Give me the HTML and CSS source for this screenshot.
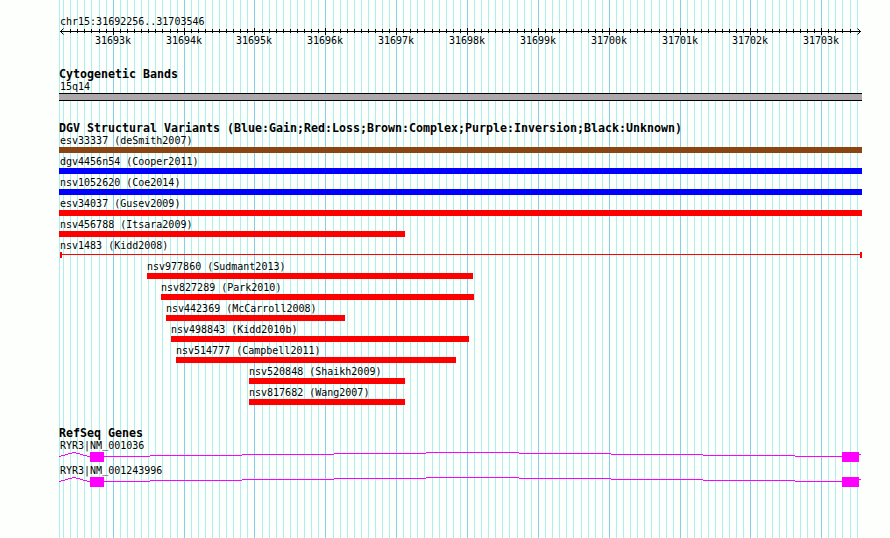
FILE: index.html
```
<!DOCTYPE html>
<html lang="en">
<head>
    <meta charset="UTF-8">
    <meta name="viewport" content="width=device-width, initial-scale=1.0">
    <title>chr15:31692256..31703546</title>
    <link rel="stylesheet" href="styles.css">
</head>
<body>
    <div class="browser">
        <svg class="grid" id="grid" width="890" height="538"></svg>

        <div class="ruler">
            <div class="label">chr15:31692256..31703546</div>
            <svg class="scale" id="scale" width="890" height="24"></svg>
        </div>

        <div class="track cytoband">
            <h2>Cytogenetic Bands</h2>
            <div class="label">15q14</div>
            <div class="band"></div>
        </div>

        <div class="track variants">
            <h2>DGV Structural Variants (Blue:Gain;Red:Loss;Brown:Complex;Purple:Inversion;Black:Unknown)</h2>
            <div id="variants"></div>
        </div>

        <div class="track genes">
            <h2>RefSeq Genes</h2>
            <div class="gene">
                <div class="label">RYR3|NM<span class="underscore">_</span>001036</div>
                <svg class="transcript" width="803" height="10"><use href="#ryr3"/></svg>
            </div>
            <div class="gene">
                <div class="label">RYR3|NM<span class="underscore">_</span>001243996</div>
                <svg class="transcript" width="803" height="10"><use href="#ryr3"/></svg>
            </div>
        </div>
    </div>

    <svg class="defs" width="0" height="0">
        <defs>
            <g id="ryr3">
                <path class="intron" d="M0 4.5h2M2 3.5h4M6 2.5h3M9 1.5h4M13 .5h4M17 1.5h4M21 2.5h3M24 3.5h4M28 4.5h3"/>
                <path class="intron" d="M45 4.5h46M91 3.5h92M183 2.5h92M275 1.5h92M367 .5h93M460 1.5h92M552 2.5h92M644 3.5h92M736 4.5h47M800 2.5h2"/>
                <rect class="exon" x="31" width="14" height="10"/>
                <rect class="exon" x="783" width="17" height="10"/>
            </g>
        </defs>
    </svg>

    <script src="script.js"></script>
</body>
</html>
```

FILE: styles.css
```
* {
    box-sizing: border-box;
    margin: 0;
    padding: 0;
}

body {
    background-color: #fdfffc;
    color: #000;
    font-family: 'DejaVu Sans Mono', monospace;
}

.browser {
    position: relative;
    width: 890px;
    height: 538px;
    overflow: hidden;
}

/* grid lines run behind every track */
.grid {
    position: absolute;
    top: 0;
    left: 0;
    z-index: -1;
}

.grid .minor {
    stroke: #afeeee;
}

.grid .major {
    stroke: #87ceeb;
}

.ruler {
    height: 68px;
    padding-top: 14px;
}

.ruler .label {
    height: 13px;
    margin-left: 59px;
}

.label {
    height: 15px;
    padding-left: 1px;
    font-size: 10px;
    line-height: 15px;
    white-space: pre;
}

.scale {
    display: block;
}

.scale path {
    fill: none;
    stroke: #000;
}

.scale text {
    font-size: 10px;
    text-anchor: middle;
}

.track {
    width: 803px;
    margin-left: 59px;
}

h2 {
    height: 12px;
    font-size: 11.63px;
    line-height: 12px;
    white-space: nowrap;
}

.cytoband {
    height: 54px;
}

.cytoband .label {
    height: 13px;
    line-height: 13px;
}

.band {
    height: 8px;
    background-color: #aca8ac;
    border-top: 1px solid #000;
    border-bottom: 1px solid #000;
}

.variants {
    height: 305px;
}

.variants h2 {
    height: 10px;
}

.variant .label {
    line-height: 17px;
}

.bar {
    height: 6px;
}

.complex {
    background-color: #8b4513;
}

.gain {
    background-color: #0000ff;
}

.loss {
    background-color: #ff0000;
}

.range {
    margin-left: 1px;
    border: solid #ff0000;
    border-width: 0 2px;
    background: linear-gradient(#ff0000, #ff0000) 0 2px / 100% 1px no-repeat;
}

.genes h2 {
    height: 11px;
}

.gene {
    height: 25px;
}

.gene .label {
    height: 14px;
}

/* keeps the underscore clear of the exon box below */
.underscore {
    line-height: 0;
    vertical-align: 1px;
}

.transcript {
    display: block;
}

.intron {
    fill: none;
    stroke: #ff00ff;
}

.exon {
    fill: #ff00ff;
}
```

FILE: script.js
```
const majors = [113, 184, 254, 325, 396, 467, 538, 609, 680, 750, 821];

// x positions where the rounded spacing is 8px instead of 7px
const wide = [91, 162, 254, 325, 424, 509, 573, 651, 757, 842];

const variants = [
    { name: 'esv33337 (deSmith2007)', type: 'complex', start: 59, end: 862 },
    { name: 'dgv4456n54 (Cooper2011)', type: 'gain', start: 59, end: 862 },
    { name: 'nsv1052620 (Coe2014)', type: 'gain', start: 59, end: 862 },
    { name: 'esv34037 (Gusev2009)', type: 'loss', start: 59, end: 862 },
    { name: 'nsv456788 (Itsara2009)', type: 'loss', start: 59, end: 405 },
    { name: 'nsv1483 (Kidd2008)', type: 'range', start: 59, end: 862 },
    { name: 'nsv977860 (Sudmant2013)', type: 'loss', start: 147, end: 473 },
    { name: 'nsv827289 (Park2010)', type: 'loss', start: 161, end: 474 },
    { name: 'nsv442369 (McCarroll2008)', type: 'loss', start: 166, end: 345 },
    { name: 'nsv498843 (Kidd2010b)', type: 'loss', start: 171, end: 469 },
    { name: 'nsv514777 (Campbell2011)', type: 'loss', start: 176, end: 456 },
    { name: 'nsv520848 (Shaikh2009)', type: 'loss', start: 249, end: 405 },
    { name: 'nsv817682 (Wang2007)', type: 'loss', start: 249, end: 405 }
];

let minorLines = 'M59.5 0v538';
let majorLines = '';
let ticks = 'M60 4.5h801M63.5 1.5l-3 3l3 3M857.5 1.5l3 3l-3 3';
let labels = '';

for (let x = 63; x < 860; x += wide.includes(x) ? 8 : 7) {
    if (majors.includes(x)) {
        majorLines += `M${x + 0.5} 0v538`;
        ticks += `M${x + 0.5} 1v7`;
    } else {
        minorLines += `M${x + 0.5} 0v538`;
        // the end ticks give way to the arrowheads
        if (x > 63 && x < 857) {
            ticks += `M${x + 0.5} 2v4`;
        }
    }
}

majors.forEach((x, i) => {
    labels += `<text x="${x}" y="17">${31693 + i}k</text>`;
});

document.getElementById('grid').innerHTML =
    `<path class="minor" d="${minorLines}"/><path class="major" d="${majorLines}"/>`;
document.getElementById('scale').innerHTML = `<path d="${ticks}"/>${labels}`;

document.getElementById('variants').innerHTML = variants.map(v => `
    <div class="variant" style="margin-left: ${v.start - 59}px; width: ${v.end - v.start}px">
        <div class="label"${v.start > 59 ? ' style="padding-left: 0"' : ''}>${v.name}</div>
        <div class="bar ${v.type}"></div>
    </div>`).join('');
```
